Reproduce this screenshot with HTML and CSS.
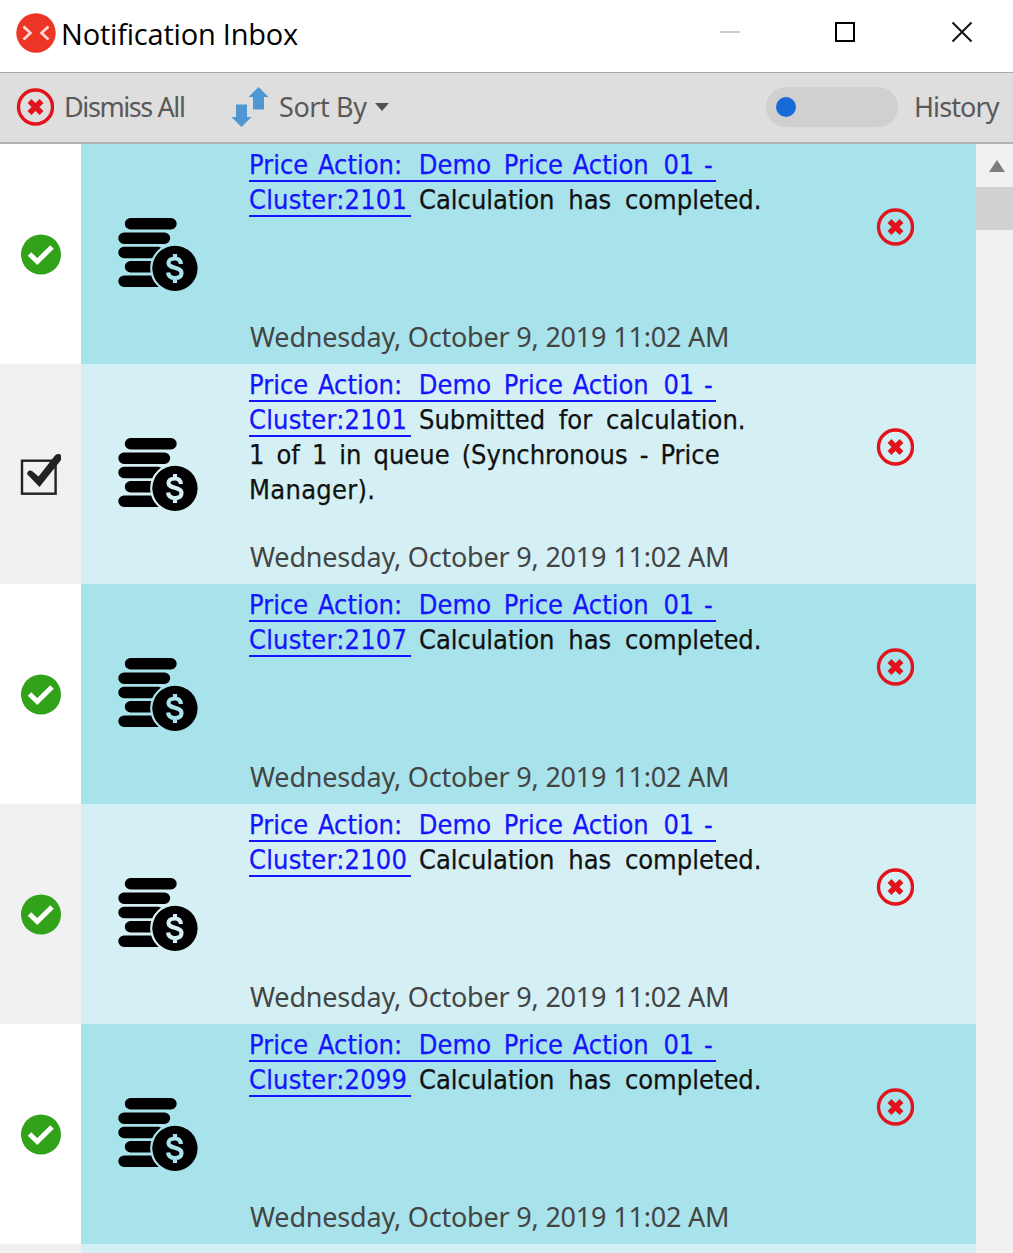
FILE: index.html
```
<!DOCTYPE html>
<html lang="en">
<head>
<meta charset="utf-8">
<title>Notification Inbox</title>
<link rel="stylesheet" href="styles.css">
</head>
<body>
<svg class="defs" width="0" height="0" aria-hidden="true">
  <symbol id="dismiss" viewBox="0 0 38 38">
    <circle cx="19.500" cy="19" r="17" fill="none" stroke="#e3131b" stroke-width="3.400"/>
    <path d="M13.500 13L25.500 25M25.500 13L13.500 25" stroke="#e3131b" stroke-width="5.400"/>
  </symbol>
  <symbol id="done" viewBox="0 0 41 41">
    <circle cx="21" cy="20.500" r="20" fill="#31a21a"/>
    <path d="M9.500 20L17.300 27.500L32 13" fill="none" stroke="#fff" stroke-width="5"/>
  </symbol>
  <symbol id="queued" viewBox="0 0 41 41">
    <rect x="2" y="6.700" width="33.600" height="33" fill="none" stroke="#222" stroke-width="2.400"/>
    <path d="M7 20Q8 15 12 17L18.500 22.500L35 1.500Q38 -1 41 1V6L19.500 33Z" fill="#222"/>
  </symbol>
  <symbol id="coins" viewBox="0 0 80 76">
    <path d="M12.500 6.800H53M6 21.200H46.500M6 35.500H40M12.500 49.800H34M6 64.300H40" stroke="#000" stroke-width="11.400" stroke-linecap="round"/>
    <circle class="ring" cx="57" cy="51.300" r="23.600" fill="none" stroke-width="2.500"/>
    <circle cx="57" cy="51.300" r="22.600" fill="#000"/>
    <path class="sign" d="M63 47C62.500 43 60.500 41.500 57 41.500C53 41.500 50.500 43.500 50.500 46C50.500 52 63.500 49.500 63.500 56C63.500 59.500 61 61 57 61C53 61 50.500 59.500 50 55.500M57 37V41.500M57 61V66" fill="none" stroke-width="4.200"/>
  </symbol>
</svg>
<div class="window">
  <header class="titlebar">
    <svg class="logo" width="40" height="40" viewBox="0 0 40 40"><circle cx="20" cy="20" r="19.700" fill="#ee3626"/><path d="M7.500 13.500L14.500 20L7.500 26.500M32.500 13.500L25.500 20L32.500 26.500" fill="none" stroke="#ffdcd8" stroke-width="2.600"/></svg>
    <h1 class="title">Notification Inbox</h1>
    <svg class="controls" width="254" height="22" viewBox="0 0 254 22"><path d="M0 11H20" stroke="#ccc" stroke-width="2"/><path d="M116 2H134V20H116Z" fill="none" stroke="#000" stroke-width="2"/><path d="M232.500 1.500L251.500 20.500M251.500 1.500L232.500 20.500" stroke="#111" stroke-width="2"/></svg>
  </header>
  <nav class="toolbar">
    <svg class="tool-icon" width="38" height="38"><use href="#dismiss"/></svg>
    <span class="label dismiss-label">Dismiss All</span>
    <svg class="sort-icon" width="38" height="40" viewBox="0 0 38 40"><path d="M27.500 0L37.500 10H33V22.500H22V10H17.500ZM10.500 40L20.500 30H16V17.500H5V30H0.500Z" fill="#4e97d3"/></svg>
    <span class="label sort-label">Sort By</span>
    <span class="caret"></span>
    <span class="toggle"><span class="knob"></span></span>
    <span class="label history-label">History</span>
  </nav>
  <div class="body">
    <main class="list">
      <article class="item">
        <div class="status"><svg width="41" height="41"><use href="#done"/></svg></div>
        <svg class="coins" width="80" height="76"><use href="#coins"/></svg>
        <div class="content"><p class="message"><a class="l1">Price Action: <span class="name">Demo</span> <span class="kind">Price</span> Action <span class="num">01</span> -</a><br><a class="l2">Cluster:2101</a><span class="rest">Calculation has completed.</span></p><time>Wednesday, October 9, 2019 11:02 AM</time></div>
        <svg class="close" width="38" height="38"><use href="#dismiss"/></svg>
      </article>
      <article class="item alt">
        <div class="status"><svg width="41" height="41"><use href="#queued"/></svg></div>
        <svg class="coins" width="80" height="76"><use href="#coins"/></svg>
        <div class="content"><p class="message"><a class="l1">Price Action: <span class="name">Demo</span> <span class="kind">Price</span> Action <span class="num">01</span> -</a><br><a class="l2">Cluster:2101</a><span class="rest">Submitted for calculation.</span><br><span class="queue">1 of 1 in queue (Synchronous - Price</span><br><span class="manager">Manager).</span></p><time>Wednesday, October 9, 2019 11:02 AM</time></div>
        <svg class="close" width="38" height="38"><use href="#dismiss"/></svg>
      </article>
      <article class="item">
        <div class="status"><svg width="41" height="41"><use href="#done"/></svg></div>
        <svg class="coins" width="80" height="76"><use href="#coins"/></svg>
        <div class="content"><p class="message"><a class="l1">Price Action: <span class="name">Demo</span> <span class="kind">Price</span> Action <span class="num">01</span> -</a><br><a class="l2">Cluster:2107</a><span class="rest">Calculation has completed.</span></p><time>Wednesday, October 9, 2019 11:02 AM</time></div>
        <svg class="close" width="38" height="38"><use href="#dismiss"/></svg>
      </article>
      <article class="item alt">
        <div class="status"><svg width="41" height="41"><use href="#done"/></svg></div>
        <svg class="coins" width="80" height="76"><use href="#coins"/></svg>
        <div class="content"><p class="message"><a class="l1">Price Action: <span class="name">Demo</span> <span class="kind">Price</span> Action <span class="num">01</span> -</a><br><a class="l2">Cluster:2100</a><span class="rest">Calculation has completed.</span></p><time>Wednesday, October 9, 2019 11:02 AM</time></div>
        <svg class="close" width="38" height="38"><use href="#dismiss"/></svg>
      </article>
      <article class="item">
        <div class="status"><svg width="41" height="41"><use href="#done"/></svg></div>
        <svg class="coins" width="80" height="76"><use href="#coins"/></svg>
        <div class="content"><p class="message"><a class="l1">Price Action: <span class="name">Demo</span> <span class="kind">Price</span> Action <span class="num">01</span> -</a><br><a class="l2">Cluster:2099</a><span class="rest">Calculation has completed.</span></p><time>Wednesday, October 9, 2019 11:02 AM</time></div>
        <svg class="close" width="38" height="38"><use href="#dismiss"/></svg>
      </article>
      <article class="item alt"><div class="status"></div></article>
    </main>
    <aside class="scrollbar"><span class="up"></span><span class="thumb"></span></aside>
  </div>
</div>
</body>
</html>
```
FILE: styles.css
```
* { box-sizing: border-box; }
body { margin: 0; background: #fff; }
.defs { display: block; }
.window { width: 1013px; height: 1253px; overflow: hidden; display: flex; flex-direction: column; font-family: "DejaVu Sans Condensed", "Noto Sans", sans-serif; }
.titlebar { height: 72px; flex: none; display: flex; align-items: flex-start; padding: 13px 39px 0 16px; }
.title { margin: 0 0 0 5px; font: 400 29px/42px "Open Sans", sans-serif; letter-spacing: -0.2px; color: #000; white-space: nowrap; }
.controls { margin: 8px 0 0 auto; flex: none; }
.toolbar { height: 72px; flex: none; display: flex; align-items: center; background: #dedede; border-top: 1px solid #aaa; border-bottom: 2px solid #b2b2b2; padding: 0 14px 2px 16px; }
.label { font-size: 27px; line-height: 34px; color: #595959; white-space: nowrap; font-family: "Noto Sans", sans-serif; }
.dismiss-label { width: 121px; margin-left: 10px; letter-spacing: -1.4px; }
.sort-icon { margin-left: 46px; }
.sort-label { width: 88px; margin-left: 10px; letter-spacing: -0.4px; }
.caret { margin-left: 8px; border: 7px solid transparent; border-top: 8px solid #505050; border-bottom: 0; }
.toggle { width: 132px; height: 40px; border-radius: 20px; background: #d0d0d0; margin-left: auto; display: flex; align-items: center; padding-left: 10px; }
.knob { width: 20px; height: 20px; border-radius: 50%; background: #176bd6; }
.history-label { width: 85px; margin-left: 16px; letter-spacing: -0.9px; }
.body { flex: 1; min-height: 0; display: flex; }
.list { width: 976px; overflow: hidden; }
.item { --tone: #a8e3eb; height: 220px; display: grid; grid-template-columns: 81px 168px 580px 147px; background: var(--tone); }
.alt { --tone: #d4f0f5; }
.status { background: #fff; padding: 90px 0 0 20px; }
.alt .status { background: #f1f1f1; }
.coins { margin: 73px 0 0 37px; }
.ring, .sign { stroke: var(--tone); }
.content { display: flex; flex-direction: column; justify-content: space-between; padding: 3px 0 10px; }
.message { margin: 0; font-size: 27px; line-height: 35px; color: #111; white-space: nowrap; -webkit-text-stroke: 0.25px; }
.message a { display: inline-block; height: 35px; color: #1414ff; background: linear-gradient(#1414ff, #1414ff) 0 33px / 100% 2px no-repeat; }
.l1 { width: 467px; word-spacing: 2px; }
.name { margin-left: 7px; }
.kind { margin-left: 3px; }
.num { margin-left: 5px; }
.l2 { width: 162px; letter-spacing: 0.2px; }
.rest { margin-left: 8px; word-spacing: 6px; }
.queue { word-spacing: 4.3px; }
.manager { letter-spacing: 0.3px; }
time { padding-left: 1px; font-size: 27px; line-height: 35px; color: #444; white-space: nowrap; font-family: "Noto Sans", sans-serif; letter-spacing: -0.2px; }
.close { margin: 64px 0 0 47px; }
.scrollbar { width: 37px; background: #f1f1f1; display: flex; flex-direction: column; align-items: center; padding-top: 16px; }
.up { border: 8.5px solid transparent; border-bottom: 12px solid #7d7d7d; border-top: 0; margin-left: 5px; }
.thumb { width: 37px; height: 43px; margin-top: 15px; background: #d1d1d1; }
```
